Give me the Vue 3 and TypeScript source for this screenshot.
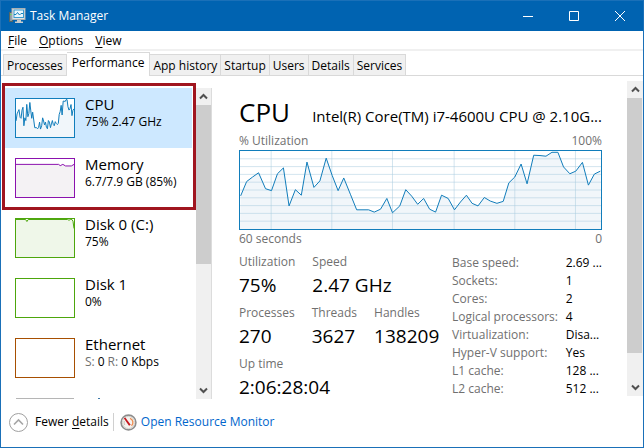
<script setup lang="ts">
import { ref } from 'vue'

interface Resource {
  name: string
  kind: string
  color: string
  fill: string
  line: string
  detail: [string, boolean][]
}

// CPU samples on a 1089 x 240 plot, oldest first
const cpuSamples: [number, number][] = [
  [2, 138], [20, 94], [38, 80], [56, 67], [77, 116], [95, 122], [113, 70], [131, 52], [148, 169],
  [167, 119], [185, 136], [202, 34], [223, 112], [241, 92], [260, 22], [278, 75], [296, 122],
  [313, 83], [333, 133], [352, 181], [388, 181], [405, 188], [424, 179], [443, 146], [460, 190],
  [482, 169], [500, 119], [518, 139], [536, 164], [554, 146], [572, 179], [590, 188], [608, 136],
  [628, 146], [647, 181], [665, 157], [683, 136], [700, 161], [718, 169], [737, 143], [755, 154],
  [775, 161], [794, 155], [811, 98], [829, 80], [848, 40], [866, 101], [886, 13], [905, 14],
  [923, 16], [941, 4], [959, 4], [976, 49], [995, 70], [1013, 62], [1033, 35], [1051, 105],
  [1069, 71], [1087, 62],
]
const cpuLine = cpuSamples.map((p) => p.join(',')).join(' ')
const memoryLine = '0,34 800,34 830,42 880,34 930,44 1040,44 1089,34'
const diskLine = '0,3 180,3 205,16 230,3 970,3 995,8 1020,3 1050,3 1070,14 1089,60'
const area = (line: string) => `0,240 ${line} 1089,240`

const resources: Resource[] = [
  { name: 'CPU', kind: 'cpu', color: '#117dbb', fill: '#f1f6fa', line: cpuLine, detail: [['75%', false], ['2.47 GHz', false]] },
  { name: 'Memory', kind: 'memory', color: '#8b12ae', fill: '#f4f2f4', line: memoryLine, detail: [['6.7/7.9 GB (85%)', false]] },
  { name: 'Disk 0 (C:)', kind: 'disk', color: '#4da60c', fill: '#eff7e9', line: diskLine, detail: [['75%', false]] },
  { name: 'Disk 1', kind: 'disk', color: '#4da60c', fill: '#eff7e9', line: '', detail: [['0%', false]] },
  { name: 'Ethernet', kind: 'net', color: '#a74f01', fill: '#fcf3eb', line: '', detail: [['S:', true], ['0', false], ['R:', true], ['0 Kbps', false]] },
]

const menus = ['File', 'Options', 'View']
const tabs = ['Processes', 'Performance', 'App history', 'Startup', 'Users', 'Details', 'Services']
const activeTab = ref('Performance')
const selected = ref('CPU')

const statRows: [string, string][][] = [
  [['Utilization', '75%'], ['Speed', '2.47 GHz']],
  [['Processes', '270'], ['Threads', '3627'], ['Handles', '138209']],
  [['Up time', '2:06:28:04']],
]
const specs: [string, string][] = [
  ['Base speed:', '2.69 ...'],
  ['Sockets:', '1'],
  ['Cores:', '2'],
  ['Logical processors:', '4'],
  ['Virtualization:', 'Disa...'],
  ['Hyper-V support:', 'Yes'],
  ['L1 cache:', '128 ...'],
  ['L2 cache:', '512 ...'],
]
const gridColumns = [94, 277, 460, 646, 829, 1012]
const gridRows = [24, 48, 72, 96, 120, 144, 168, 192, 216]
</script>

<template>
  <div class="window">
    <header class="titlebar">
      <svg class="app-icon" width="17" height="16" viewBox="0 0 17 16" aria-hidden="true">
        <rect x="0.5" y="4.5" width="3" height="9" fill="#8d9aa3" stroke="#566" />
        <path d="M1 6.500h2" stroke="#5fe04d" />
        <rect x="3" y="0.500" width="13" height="11" fill="#dfe3e4" stroke="#a9b0b3" />
        <rect x="5" y="2" width="9.500" height="7.500" fill="#eaf7fd" stroke="#3b9bd0" />
        <path d="M5 6.500h2l1.500-2 2 2.500 1.500-1.500h2" fill="none" stroke="#1582bd" />
        <path d="M8 12h4v1.500h2v1.500H6v-1.500h2z" fill="#c8cccd" />
      </svg>
      <h1>Task Manager</h1>
      <div class="window-buttons">
        <button type="button" aria-label="Minimize">
          <svg width="10" height="10"><path d="M0 5.500h10" /></svg>
        </button>
        <button type="button" aria-label="Maximize">
          <svg width="10" height="10"><path d="M.5 .5h9v9h-9z" /></svg>
        </button>
        <button type="button" aria-label="Close">
          <svg width="10" height="10"><path d="M0 0l10 10M10 0L0 10" /></svg>
        </button>
      </div>
    </header>

    <nav class="menubar">
      <button v-for="m in menus" :key="m" type="button"><u>{{ m[0] }}</u>{{ m.slice(1) }}</button>
    </nav>

    <div class="tabs" role="tablist">
      <button
        v-for="t in tabs"
        :key="t"
        type="button"
        role="tab"
        :aria-selected="t === activeTab"
        :class="{ active: t === activeTab }"
        @click="activeTab = t"
      >{{ t }}</button>
    </div>

    <main class="body">
      <aside class="sidebar">
        <div class="list">
          <button
            v-for="r in resources"
            :key="r.name"
            type="button"
            class="resource"
            :class="[r.kind, { selected: r.name === selected }]"
            @click="selected = r.name"
          >
            <svg class="thumb" viewBox="0 0 1089 240" preserveAspectRatio="none" aria-hidden="true">
              <template v-if="r.line">
                <polygon :points="area(r.line)" :fill="r.fill" />
                <polyline :points="r.line" :stroke="r.color" />
              </template>
            </svg>
            <span class="resource-text">
              <span class="resource-name">{{ r.name }}</span>
              <span class="resource-detail">
                <span v-for="(d, i) in r.detail" :key="i" :class="{ muted: d[1] }">{{ d[0] }}</span>
              </span>
            </span>
          </button>
          <div class="next-resource"><span class="next-thumb"></span><span class="next-dot"></span></div>
          <div class="highlight"></div>
        </div>
        <div class="scrollbar list-scroll">
          <button type="button" aria-label="Scroll list up"><svg width="9" height="7"><path d="M1 5.500l3.500-3.500 3.500 3.500" /></svg></button>
          <span class="handle"></span>
          <button type="button" aria-label="Scroll list down"><svg width="9" height="7"><path d="M1 1.500l3.500 3.500 3.500-3.500" /></svg></button>
        </div>
      </aside>

      <section class="detail">
        <div class="heading">
          <h2>CPU</h2>
          <p>Intel(R) Core(TM) i7-4600U CPU @ 2.10G...</p>
        </div>
        <div class="axis"><span>% Utilization</span><span>100%</span></div>
        <svg class="chart" viewBox="0 0 1089 240" preserveAspectRatio="none" role="img" aria-label="CPU utilization">
          <polygon :points="area(cpuLine)" fill="#f1f6fa" />
          <g class="grid">
            <path v-for="x in gridColumns" :key="'c' + x" :d="`M${x} 0V240`" />
            <path v-for="y in gridRows" :key="'r' + y" :d="`M0 ${y}H1089`" />
          </g>
          <polyline :points="cpuLine" stroke="#117dbb" />
        </svg>
        <div class="axis"><span>60 seconds</span><span>0</span></div>
        <div class="figures">
          <div class="stats">
            <dl v-for="(row, i) in statRows" :key="i">
              <div v-for="s in row" :key="s[0]">
                <dt>{{ s[0] }}</dt>
                <dd>{{ s[1] }}</dd>
              </div>
            </dl>
          </div>
          <table class="specs">
            <tbody>
              <tr v-for="s in specs" :key="s[0]">
                <th scope="row">{{ s[0] }}</th>
                <td>{{ s[1] }}</td>
              </tr>
            </tbody>
          </table>
        </div>
      </section>

      <div class="scrollbar detail-scroll">
        <button type="button" aria-label="Scroll details up"><svg width="9" height="7"><path d="M1 5.500l3.500-3.500 3.500 3.500" /></svg></button>
        <span class="handle"></span>
        <button type="button" aria-label="Scroll details down"><svg width="9" height="7"><path d="M1 1.500l3.500 3.500 3.500-3.500" /></svg></button>
      </div>
    </main>

    <footer class="footer">
      <button type="button" class="fewer">
        <svg width="19" height="19" viewBox="0 0 19 19" aria-hidden="true">
          <circle cx="9.500" cy="9.500" r="9" fill="#fff" stroke="#a0a0a0" />
          <path d="M5 11.500l4.500-4.500 4.500 4.500" fill="none" stroke="#a6a6a6" stroke-width="1.600" />
        </svg>
        <span>Fewer <u>d</u>etails</span>
      </button>
      <a href="#resource-monitor" class="monitor">
        <svg width="17" height="17" viewBox="0 0 17 17" aria-hidden="true">
          <circle cx="8.500" cy="8.500" r="7.400" fill="#f5f3ef" stroke="#8c8c8c" stroke-width="1.600" />
          <circle cx="8.500" cy="8.500" r="6.100" fill="none" stroke="#d5d2cc" />
          <path d="M10 4.300a4.500 4.500 0 0 1 1.500 7.500" fill="none" stroke="#ef8a4b" stroke-width="1.300" />
          <path d="M4.800 11a4.500 4.500 0 0 1-.5-4" fill="none" stroke="#c9c3b8" />
          <path d="M3.800 4.200l1.500-.8 5.400 7.300-1.700 1z" fill="#c5161d" />
        </svg>
        <span>Open Resource Monitor</span>
      </a>
    </footer>
  </div>
</template>

<style>
body {
  margin: 0;
}
</style>

<style scoped>
* {
  box-sizing: border-box;
}
.window {
  display: flex;
  flex-direction: column;
  height: 100vh;
  border: 1px solid #1a70b8;
  background: #fff;
  color: #000;
  font-family: 'Open Sans', 'Noto Sans', sans-serif;
  font-size: 12px;
  line-height: 16px;
  white-space: nowrap;
}
button {
  margin: 0;
  padding: 0;
  border: 0;
  background: none;
  color: inherit;
  font: inherit;
  text-align: left;
}
h1, h2, p, dl, dd {
  margin: 0;
  font-size: 12px;
  font-weight: 400;
}
u {
  text-underline-offset: 2px;
}
svg {
  flex: none;
}
.titlebar {
  display: flex;
  flex: none;
  align-items: center;
  height: 30px;
  padding-left: 8px;
  background: #0063b1;
  color: #fff;
}
.titlebar h1 {
  margin-left: 4px;
}
.window-buttons {
  display: flex;
  margin-left: auto;
}
.window-buttons button {
  display: flex;
  align-items: center;
  justify-content: center;
  width: 46px;
  height: 30px;
}
.window-buttons path {
  fill: none;
  stroke: #fff;
}
.menubar {
  display: flex;
  flex: none;
  gap: 12px;
  height: 20px;
  padding: 2px 7px 0;
  border-bottom: 2px solid #f0f0f0;
}
.tabs {
  display: flex;
  flex: none;
  align-items: flex-end;
  height: 25px;
  padding-left: 2px;
  border-bottom: 1px solid #d9d9d9;
}
.tabs button {
  height: 21px;
  padding: 1px 3px 0;
  border: 1px solid #d9d9d9;
  border-bottom: 0;
  border-left-width: 0;
  background: #f0f0f0;
}
.tabs button:first-child {
  border-left-width: 1px;
}
.tabs .active {
  height: 24px;
  margin-bottom: -1px;
  padding: 0 5px 3px;
  background: #fff;
}
.body {
  display: flex;
  flex: 1;
  min-height: 0;
}
.sidebar {
  display: flex;
  flex: none;
  padding: 12px 0 0 4px;
}
.list {
  position: relative;
  width: 191px;
  padding-right: 4px;
}
.resource {
  display: flex;
  gap: 10px;
  width: 100%;
  height: 60px;
  padding: 10px;
}
.selected {
  background: #cde8ff;
}
.thumb {
  width: 60px;
  height: 40px;
  border: 1px solid;
  background: #fff;
}
.cpu .thumb {
  border-color: #117dbb;
}
.memory .thumb {
  border-color: #8b12ae;
}
.disk .thumb {
  border-color: #4da60c;
}
.net .thumb {
  border-color: #a74f01;
}
polyline {
  fill: none;
  vector-effect: non-scaling-stroke;
}
.resource-text,
.resource-name {
  display: block;
}
.resource-name {
  margin-top: -4px;
  font-size: 15px;
  line-height: 20px;
}
.resource-detail {
  display: flex;
  gap: 3px;
}
.muted {
  color: #707070;
}
.next-resource {
  display: flex;
  gap: 24px;
  padding: 10px 11px 0;
}
.next-thumb {
  width: 58px;
  height: 1px;
  background: #b5b5b5;
}
.next-dot {
  width: 2px;
  height: 1px;
  background: #3c78a8;
}
.highlight {
  position: absolute;
  top: -5px;
  left: -3px;
  width: 194px;
  height: 127px;
  border: 3px solid #a0151f;
  pointer-events: none;
}
.scrollbar {
  display: flex;
  flex: none;
  flex-direction: column;
  width: 16px;
  background: #f0f0f0;
}
.scrollbar button {
  display: flex;
  align-items: center;
  justify-content: center;
  height: 17px;
}
.scrollbar path {
  fill: none;
  stroke: #505050;
  stroke-width: 2;
}
.handle {
  width: 15px;
  background: #cdcdcd;
}
.scrollbar button:last-child {
  margin-top: auto;
}
.list-scroll {
  border-right: 1px solid #dcdcdc;
}
.list-scroll .handle {
  height: 51%;
  flex: none;
}
.detail {
  flex: 1;
  min-width: 0;
  padding: 16px 25px 0 27px;
}
.detail-scroll {
  margin: 5px 0 3px;
}
.detail-scroll .handle {
  height: 81%;
}
.heading {
  display: flex;
  align-items: baseline;
  justify-content: space-between;
  height: 41px;
}
.heading h2 {
  font-size: 26px;
  line-height: 40px;
}
.heading p {
  font-size: 15px;
}
.axis {
  display: flex;
  justify-content: space-between;
  color: #707070;
}
.chart {
  display: block;
  width: 100%;
  height: 80px;
  margin: 1px 0;
  border: 1px solid #117dbb;
}
.grid path {
  stroke: #a8cbe0;
  stroke-opacity: 0.5;
  shape-rendering: crispEdges;
  vector-effect: non-scaling-stroke;
}
.figures {
  display: flex;
  padding-top: 7px;
}
.stats {
  display: flex;
  flex: none;
  flex-direction: column;
  gap: 4px;
  width: 213px;
}
.stats dl {
  display: flex;
  gap: 17px;
}
.stats dt {
  color: #707070;
}
.stats dd {
  font-size: 19px;
  line-height: 31px;
}
.specs {
  flex: 1;
  align-self: flex-start;
  border-collapse: collapse;
}
.specs th,
.specs td {
  height: 18px;
  padding: 0;
  font-weight: 400;
  text-align: left;
}
.specs th {
  width: 114px;
  color: #707070;
}
.footer {
  display: flex;
  flex: none;
  align-items: flex-start;
  height: 48px;
  padding: 14px 8px 0;
}
.fewer,
.monitor {
  display: flex;
  align-items: center;
  height: 18px;
}
.fewer {
  gap: 7px;
  padding-right: 4px;
  border-right: 1px solid #d0d0d0;
}
.monitor {
  gap: 4px;
  padding-left: 6px;
  color: #0066cc;
  text-decoration: none;
}
</style>
